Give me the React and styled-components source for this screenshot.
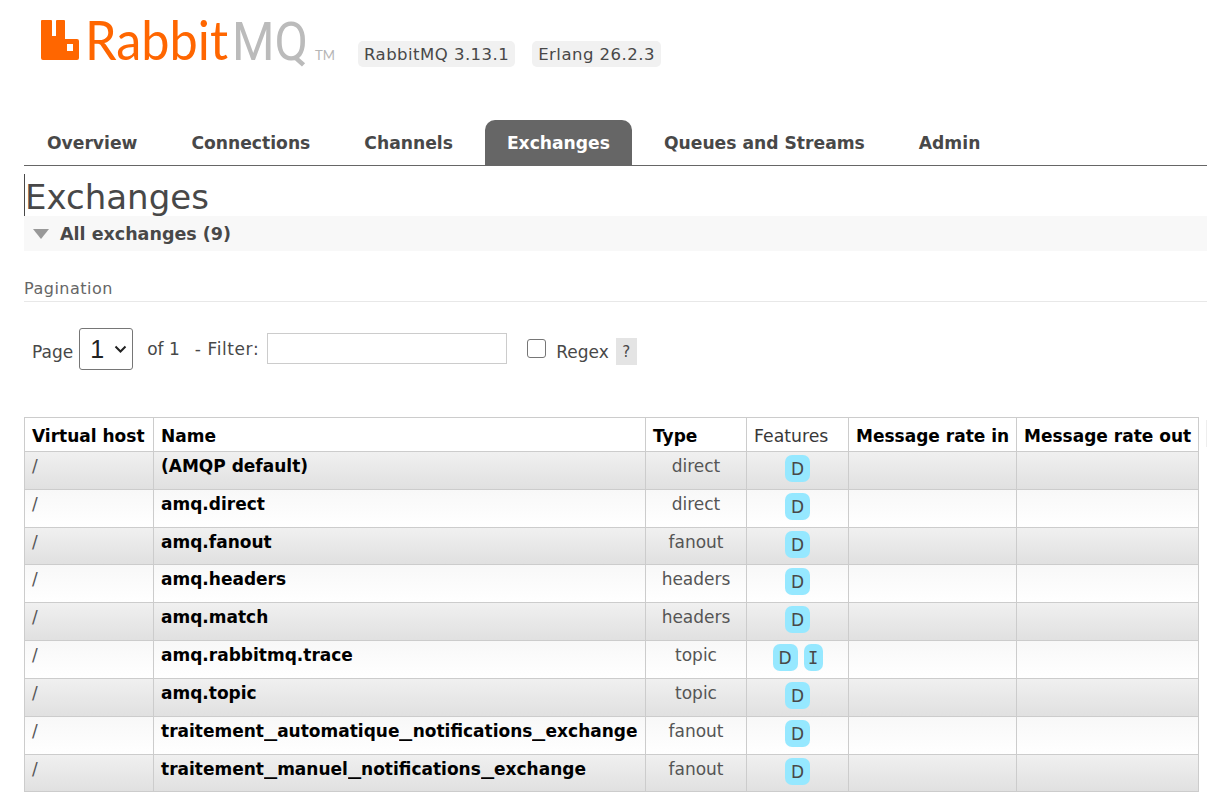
import React from "react";
import styled, { createGlobalStyle } from "styled-components";

const Global = createGlobalStyle`
  html, body { margin: 0; padding: 0; background: #fff; overflow: hidden; }
  body { font-family: "DejaVu Sans", Verdana, sans-serif; color: #484848; }
`;
const Page = styled.div`width: 1207px; height: 805px; overflow: hidden; padding-left: 24px; box-sizing: border-box;`;
const Header = styled.header`height: 120px; display: flex; align-items: flex-start;`;
const Logo = styled.svg`display: block; flex: none; margin: 10px 22px 0 17px; width: 295px; height: 65px;`;
const Badge = styled.span`
  background: #f1f1f1; border-radius: 5px; font-size: 16.5px; line-height: 26px; height: 26px; padding: 1px 6px 0; box-sizing: border-box;
  color: #484848; margin: 41px 17px 0 0; letter-spacing: 0.47px; white-space: nowrap;
`;
const Tabs = styled.nav`display: flex; height: 45px; border-bottom: 1px solid #666; padding-left: 1px;`;
const Tab = styled.a`
  display: flex; align-items: center; height: 45px; padding: 0 22px; margin-right: 10px; box-sizing: border-box;
  font-weight: 700; font-size: 17.16px; color: ${p => p.$active ? "#fff" : "#484848"};
  background: ${p => p.$active ? "#666" : "transparent"}; border-radius: 10px 10px 0 0;
`;
const Title = styled.h1`
  margin: 8px 0 0; height: 42px; font-weight: 400; font-size: 34px; line-height: 46px; color: #484848;
  border-left: 1px solid #484848; width: fit-content; white-space: nowrap;
`;
const Section = styled.div`display: flex; align-items: center; height: 35px; background: #f8f8f8; padding-left: 9px; gap: 11px;`;
const Tri = styled.span`width: 0; height: 0; border-left: 8px solid transparent; border-right: 8px solid transparent; border-top: 10px solid #999; margin-top: 1px;`;
const SectionText = styled.span`font-weight: 700; font-size: 17.5px; color: #484848; padding-top: 1px;`;
const PagTitle = styled.div`
  margin-top: 28px; height: 22px; font-size: 16px; line-height: 20px; letter-spacing: 0.5px; color: #666; border-bottom: 1px solid #e8e8e8;
`;
const Controls = styled.div`display: flex; align-items: flex-start; height: 115px; font-size: 17px; color: #484848;`;
const Label = styled.span`margin: ${p => p.$top}px ${p => p.$right}px 0 ${p => p.$left}px; line-height: 20px; white-space: nowrap; letter-spacing: ${p => p.$track || 0}px;`;
const SelectBox = styled.div`position: relative; width: 54px; height: 42px; margin-top: 26px; flex: none;`;
const Select = styled.select`
  appearance: none; width: 54px; height: 42px; display: block; box-sizing: border-box; font-size: 25px; font-family: "Liberation Sans", sans-serif;
  background: #fff; border: 1px solid #767676; border-radius: 3px; color: #222; padding: 0 0 0 10px; margin: 0;
`;
const Chevron = styled.svg`position: absolute; right: 6px; top: 17px; width: 13px; height: 8px; pointer-events: none;`;
const Input = styled.input`
  width: 240px; height: 31px; margin-top: 31px; box-sizing: border-box; border: 1px solid #ccc; background: #fff; padding: 0; flex: none;
`;
const Check = styled.span`
  width: 19px; height: 19px; margin: 37px 0 0 20px; box-sizing: border-box; border: 1.5px solid #767676; border-radius: 3px; background: #fff; flex: none;
`;
const Help = styled.span`
  width: 21px; height: 27px; margin-top: 36px; background: #e4e4e4; display: flex; align-items: center; justify-content: center; font-size: 15px; color: #484848;
`;
const TableWrap = styled.div`position: relative; width: 1183px;`;
const Table = styled.table`width: 1175px; table-layout: fixed; border-collapse: collapse; font-size: 17px;`;
const Th = styled.th`
  height: 34px; padding: 2px 0 0 7px; text-align: left; border: 1px solid #ccc; background: #fff; white-space: nowrap; box-sizing: border-box;
  font-weight: ${p => p.$light ? 400 : 700}; color: ${p => p.$light ? "#383838" : "#000"}; font-size: ${p => p.$light ? 17.3 : 17}px; vertical-align: middle;
`;
const Row = styled.tr`
  background: ${p => p.$odd ? "linear-gradient(#f0f0f0, #e0e0e0)" : "linear-gradient(#f8f8f8, #fff)"};
`;
const Td = styled.td`
  padding: 4px 0 0 7px; box-sizing: border-box; border: 1px solid #ccc; vertical-align: top; line-height: 20px; white-space: nowrap;
  font-size: 17px; color: #555; text-align: ${p => p.$center ? "center" : "left"};
  ${p => p.$center ? "padding-left: 0;" : ""}
`;
const NameCell = styled(Td)`font-weight: 700; color: #000;`;
const Underscore = styled.span`display: inline-block; width: 13.2px; transform: scaleX(1.55); transform-origin: left center;`;
const FeatureCell = styled(Td)`text-align: center; padding: 3px 0 0;`;
const Features = styled.div`display: flex; justify-content: center; gap: 6px;`;
const Feature = styled.span`
  display: flex; align-items: center; justify-content: center; background: #96e8ff; border-radius: 7px; height: 27px; padding-top: 1px; box-sizing: border-box;
  width: ${p => p.$mono ? 19 : 25}px; font-size: 17px; color: #484848;
  font-family: ${p => p.$mono ? '"DejaVu Sans Mono", monospace' : '"DejaVu Sans", sans-serif'};
`;
const Columns = styled.div`position: absolute; right: 0; top: 3px; width: 1px; height: 27px; background: #eee;`;

const tabs = ["Overview", "Connections", "Channels", "Exchanges", "Queues and Streams", "Admin"];
const rows = [
  ["(AMQP default)", "direct", ["D"], 38],
  ["amq.direct", "direct", ["D"], 38],
  ["amq.fanout", "fanout", ["D"], 37],
  ["amq.headers", "headers", ["D"], 38],
  ["amq.match", "headers", ["D"], 38],
  ["amq.rabbitmq.trace", "topic", ["D", "I"], 38],
  ["amq.topic", "topic", ["D"], 38],
  ["traitement_automatique_notifications_exchange", "fanout", ["D"], 38],
  ["traitement_manuel_notifications_exchange", "fanout", ["D"], 37],
];

const Name = ({ value }) => value.split("_").map((part, i) => (
  <React.Fragment key={i}>{i > 0 && <Underscore>_</Underscore>}{part}</React.Fragment>
));

export default function App() {
  return (
    <Page>
      <Global />
      <Header>
        <Logo viewBox="0 0 295 65">
          <path transform="translate(0 7)" fillRule="evenodd" fill="#f60" d="M1 3h9a1 1 0 0 1 1 1v15h4V4a1 1 0 0 1 1-1h7a1 1 0 0 1 1 1v18h12a2 2 0 0 1 2 2v17a2 2 0 0 1-2 2H2a2 2 0 0 1-2-2V4a1 1 0 0 1 1-1zM26 27v7h6v-7z" />
          <text x="44" y="50" fill="#f60" fontFamily="Lato, sans-serif" fontSize="54" textLength="143" lengthAdjust="spacingAndGlyphs">Rabbit</text>
          <text x="191" y="50" fill="#bbb" fontFamily="Roboto, sans-serif" fontWeight="400" fontSize="54" textLength="76" lengthAdjust="spacingAndGlyphs">MQ</text>
          <text x="274" y="50" fill="#b5b5b5" fontFamily="Lato, sans-serif" fontSize="14" textLength="20" lengthAdjust="spacingAndGlyphs">TM</text>
        </Logo>
        <Badge>RabbitMQ 3.13.1</Badge>
        <Badge>Erlang 26.2.3</Badge>
      </Header>
      <Tabs>
        {tabs.map(t => <Tab key={t} $active={t === "Exchanges"}>{t}</Tab>)}
      </Tabs>
      <Title>Exchanges</Title>
      <Section><Tri /><SectionText>All exchanges (9)</SectionText></Section>
      <PagTitle>Pagination</PagTitle>
      <Controls>
        <Label $top={40} $left={8} $right={6}>Page</Label>
        <SelectBox>
          <Select defaultValue="1"><option>1</option></Select>
          <Chevron viewBox="0 0 13 8"><path d="M1.5 1.5l5 5 5-5" fill="none" stroke="#222" strokeWidth="2" /></Chevron>
        </SelectBox>
        <Label $top={37} $left={14} $right={15}>of 1</Label>
        <Label $top={37} $left={0} $right={8} $track={0.6}>- Filter:</Label>
        <Input />
        <Check />
        <Label $top={40} $left={10} $right={7}>Regex</Label>
        <Help>?</Help>
      </Controls>
      <TableWrap>
        <Table>
          <colgroup>
            <col style={{ width: 129 }} /><col style={{ width: 492 }} /><col style={{ width: 101 }} />
            <col style={{ width: 102 }} /><col style={{ width: 168 }} /><col style={{ width: 182 }} />
          </colgroup>
          <thead>
            <tr>
              <Th>Virtual host</Th><Th>Name</Th><Th>Type</Th><Th $light>Features</Th>
              <Th>Message rate in</Th><Th>Message rate out</Th>
            </tr>
          </thead>
          <tbody>
            {rows.map((r, i) => (
              <Row key={r[0]} $odd={i % 2 === 0} style={{ height: r[3] }}>
                <Td>/</Td>
                <NameCell><Name value={r[0]} /></NameCell>
                <Td $center>{r[1]}</Td>
                <FeatureCell>
                  <Features>
                    {r[2].map(f => <Feature key={f} $mono={f === "I"}>{f}</Feature>)}
                  </Features>
                </FeatureCell>
                <Td /><Td />
              </Row>
            ))}
          </tbody>
        </Table>
        <Columns />
      </TableWrap>
    </Page>
  );
}
